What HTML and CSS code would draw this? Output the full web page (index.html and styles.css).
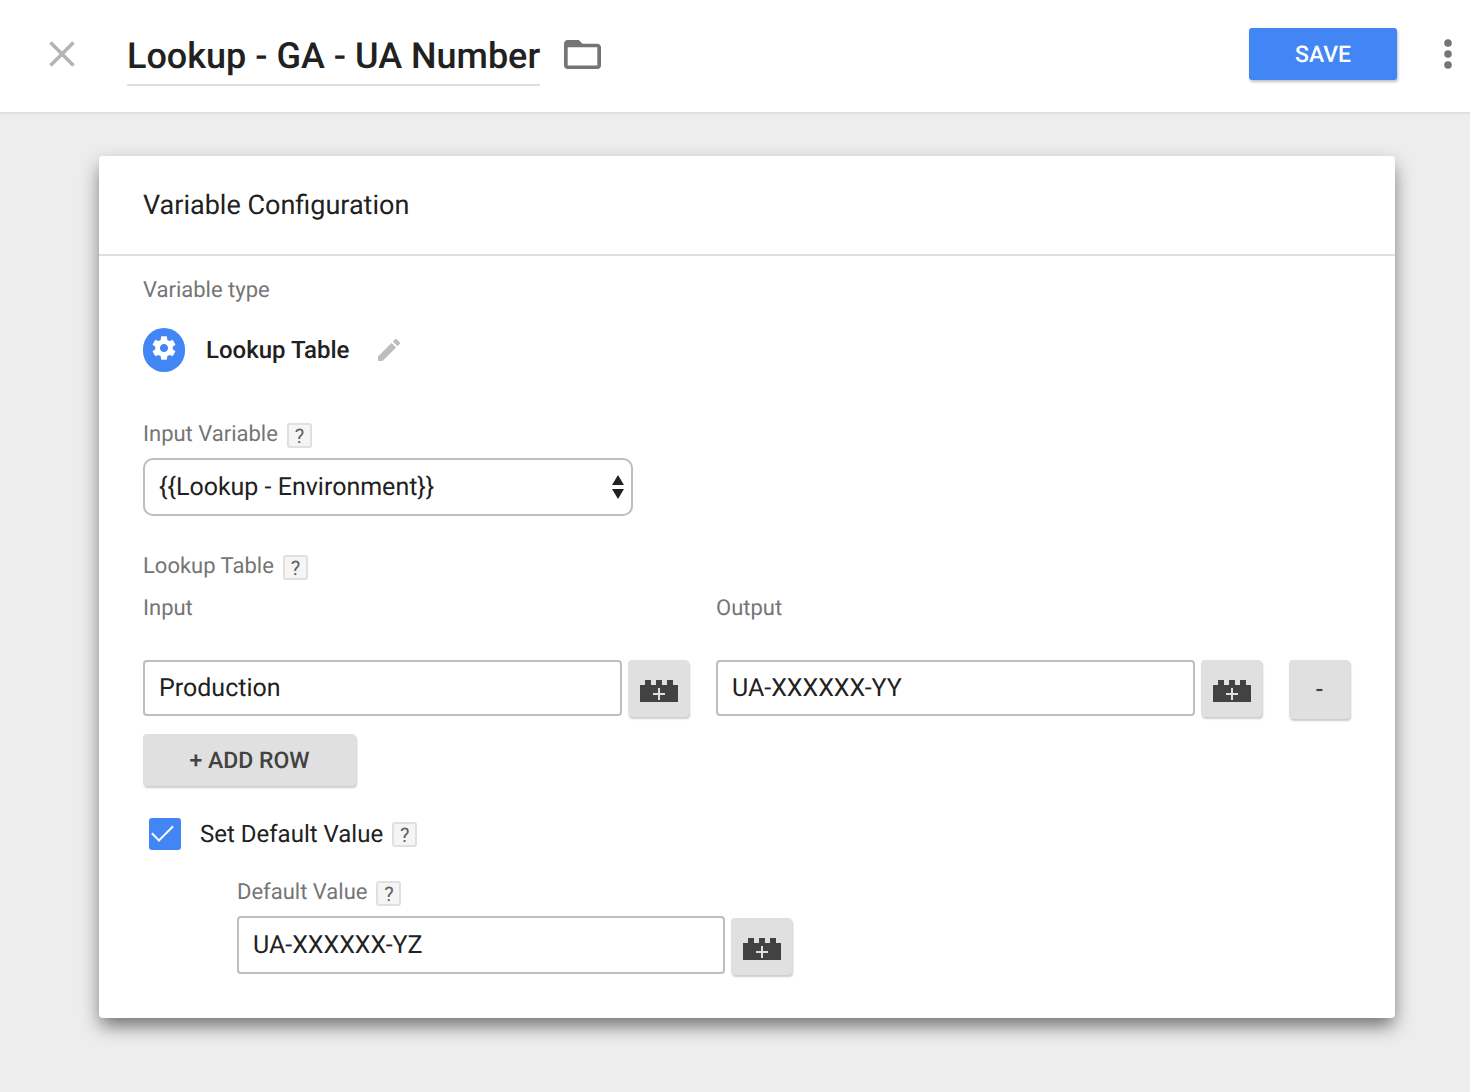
FILE: index.html
```html
<!DOCTYPE html>
<html lang="en">
<head>
<meta charset="utf-8">
<meta name="viewport" content="width=device-width, initial-scale=1">
<title>Lookup - GA - UA Number</title>
<link rel="stylesheet" href="styles.css">
</head>
<body>
<svg class="sprite" aria-hidden="true">
  <symbol id="brick" viewBox="0 0 38 22">
    <path fill="#424242" d="M0 5h5V0h6v5h5V0h6v5h5V0h6v5h5v17H0z"/>
    <path stroke="#e0e0e0" stroke-width="2" d="M13 14h12M19 8v12"/>
  </symbol>
</svg>

<header class="topbar">
  <button class="icon-button close" type="button" aria-label="Close">
    <svg width="26" height="26" viewBox="0 0 26 26"><path d="M1.500 1.500l23 23M24.500 1.500l-23 23" stroke="#b4b4b4" stroke-width="3.600"/></svg>
  </button>
  <h1 class="title">Lookup - GA - UA Number</h1>
  <button class="icon-button folder" type="button" aria-label="Move to folder">
    <svg width="37" height="29" viewBox="2 4 20 16" preserveAspectRatio="none"><path fill="#757575" d="M20 6h-8l-2-2H4c-1.100 0-1.990.9-1.990 2L2 18c0 1.100.9 2 2 2h16c1.100 0 2-.9 2-2V8c0-1.100-.9-2-2-2zm0 12H4V8h16v10z"/></svg>
  </button>
  <button class="save" type="button">SAVE</button>
  <button class="icon-button more" type="button" aria-label="More actions">
    <svg width="8" height="30" viewBox="0 0 8 30" fill="#757575"><circle cx="4" cy="4" r="3.800"/><circle cx="4" cy="15" r="3.800"/><circle cx="4" cy="26" r="3.800"/></svg>
  </button>
</header>

<main class="card">
  <h2 class="card-title">Variable Configuration</h2>
  <form class="card-body">
    <div class="label-row">Variable type</div>
    <div class="type-row">
      <span class="type-badge">
        <svg width="28" height="28" viewBox="0 0 24 24"><path fill="#fff" d="M19.430 12.980c.04-.32.07-.64.07-.98s-.03-.66-.07-.98l2.110-1.650c.19-.15.24-.42.12-.64l-2-3.460c-.12-.22-.39-.3-.61-.22l-2.490 1c-.52-.4-1.080-.73-1.690-.98l-.38-2.650C14.460 2.180 14.250 2 14 2h-4c-.25 0-.46.18-.49.42l-.38 2.650c-.61.25-1.170.59-1.690.98l-2.490-1c-.23-.09-.49 0-.61.22l-2 3.460c-.13.22-.07.49.12.64l2.110 1.650c-.04.32-.07.65-.07.98s.03.66.07.98l-2.110 1.650c-.19.15-.24.42-.12.64l2 3.460c.12.22.39.3.61.22l2.490-1c.52.4 1.080.73 1.690.98l.38 2.650c.03.24.24.42.49.42h4c.25 0 .46-.18.49-.42l.38-2.650c.61-.25 1.170-.59 1.690-.98l2.490 1c.23.09.49 0 .61-.22l2-3.460c.12-.22.07-.49-.12-.64l-2.110-1.650zM12 15.500c-1.930 0-3.500-1.570-3.500-3.500s1.570-3.500 3.500-3.500 3.500 1.570 3.500 3.500-1.570 3.500-3.500 3.500z"/></svg>
      </span>
      <span class="type-name">Lookup Table</span>
      <button class="icon-button" type="button" aria-label="Edit variable type">
        <svg width="22" height="22" viewBox="3 3 18 18"><path fill="#bdbdbd" d="M3 17.250V21h3.750L17.810 9.940l-3.750-3.750L3 17.250zM20.710 7.040c.39-.39.39-1.020 0-1.410l-2.340-2.340c-.39-.39-1.020-.39-1.410 0l-1.830 1.830 3.750 3.750 1.830-1.830z"/></svg>
      </button>
    </div>

    <div class="label-row">
      <label for="input-variable">Input Variable</label>
      <button class="help" type="button" aria-label="Help">?</button>
    </div>
    <div class="select-wrap">
      <select id="input-variable" class="field select"><option>{{Lookup - Environment}}</option></select>
      <svg class="arrows" width="12" height="24" viewBox="0 0 12 24"><path fill="#212121" d="M6 0l6 10H0zM6 24l6-10H0z"/></svg>
    </div>

    <div class="label-row">
      <span>Lookup Table</span>
      <button class="help" type="button" aria-label="Help">?</button>
    </div>
    <table class="lookup">
      <thead>
        <tr><th scope="col">Input</th><th scope="col">Output</th><td class="remove-col"></td></tr>
      </thead>
      <tbody>
        <tr>
          <td>
            <div class="field-row">
              <input class="field" type="text" value="Production" aria-label="Input">
              <button class="gray-button brick" type="button" aria-label="Insert variable"><svg width="38" height="22"><use href="#brick"/></svg></button>
            </div>
          </td>
          <td>
            <div class="field-row">
              <input class="field" type="text" value="UA-XXXXXX-YY" aria-label="Output">
              <button class="gray-button brick" type="button" aria-label="Insert variable"><svg width="38" height="22"><use href="#brick"/></svg></button>
            </div>
          </td>
          <td class="remove-col"><button class="gray-button remove" type="button">-</button></td>
        </tr>
      </tbody>
    </table>
    <button class="gray-button add-row" type="button">+ ADD ROW</button>

    <div class="check-row">
      <input id="set-default" class="checkbox" type="checkbox" checked>
      <label for="set-default">Set Default Value</label>
      <button class="help" type="button" aria-label="Help">?</button>
    </div>
    <div class="default-group">
      <div class="label-row">
        <label for="default-value">Default Value</label>
        <button class="help" type="button" aria-label="Help">?</button>
      </div>
      <div class="field-row default-row">
        <input id="default-value" class="field" type="text" value="UA-XXXXXX-YZ">
        <button class="gray-button brick" type="button" aria-label="Insert variable"><svg width="38" height="22"><use href="#brick"/></svg></button>
      </div>
    </div>
  </form>
</main>
</body>
</html>
```

FILE: styles.css
```css
* {
  box-sizing: border-box;
}

body {
  margin: 0;
  background: #ededed;
  color: #212121;
  font-family: Roboto, "Liberation Sans", sans-serif;
  font-size: 24px;
  text-rendering: geometricPrecision;
}

button,
input,
select {
  margin: 0;
  color: inherit;
  font-family: inherit;
  text-rendering: inherit;
}

button {
  flex: none;
  padding: 0;
  border: 0;
  background: none;
  cursor: pointer;
}

svg {
  display: block;
}

.sprite {
  position: absolute;
  width: 0;
  height: 0;
}

.topbar {
  display: flex;
  align-items: flex-start;
  padding: 28px 18px 26px 49px;
  border-bottom: 2px solid #e0e0e0;
  background: #fff;
}

.icon-button {
  display: flex;
  align-items: center;
  justify-content: center;
}

.close,
.folder,
.more {
  height: 52px;
}

.title {
  margin: 0 24px 0 52px;
  border-bottom: 2px solid #e0e0e0;
  font-size: 36px;
  font-weight: 500;
  line-height: 56px;
}

.save {
  width: 148px;
  height: 52px;
  margin-right: 47px;
  margin-left: auto;
  border-radius: 3px;
  background: #4285f4;
  box-shadow: 1px 2px 3px rgba(0, 0, 0, 0.25);
  color: #fff;
  font-size: 23px;
  font-weight: 500;
}

.card {
  margin: 42px 75px 74px 99px;
  border-radius: 4px;
  background: #fff;
  box-shadow: 0 8px 20px rgba(0, 0, 0, 0.28), 0 10px 16px -4px rgba(0, 0, 0, 0.35);
}

.card-title {
  margin: 0;
  padding: 0 44px;
  border-bottom: 2px solid #e0e0e0;
  font-size: 27px;
  font-weight: 400;
  line-height: 98px;
}

.card-body {
  padding: 20px 44px 43px;
}

.label-row {
  display: flex;
  align-items: center;
  gap: 9px;
  height: 30px;
  color: #757575;
  font-size: 22px;
  line-height: 30px;
}

.help {
  width: 25px;
  height: 25px;
  border: 2px solid #e0e0e0;
  border-radius: 3px;
  background: #f5f5f5;
  color: #616161;
  font-size: 20px;
  line-height: 23px;
}

.type-row {
  display: flex;
  align-items: center;
  margin: 22px 0 48px;
}

.type-badge {
  display: flex;
  justify-content: center;
  width: 42px;
  height: 44px;
  padding-top: 6px;
  border-radius: 21px;
  background: #4285f4;
}

.type-name {
  margin: 0 29px 0 21px;
  font-weight: 500;
}

.field {
  width: 100%;
  min-width: 0;
  height: 56px;
  padding: 0 14px;
  border: 2px solid #bdbdbd;
  border-radius: 4px;
  background: #fff;
  font-size: 25px;
}

.select-wrap {
  position: relative;
  max-width: 490px;
  margin: 8px 0 36px;
}

.select {
  display: block;
  height: 58px;
  border-radius: 10px;
  appearance: none;
}

.arrows {
  position: absolute;
  top: 17px;
  right: 9px;
  pointer-events: none;
}

.lookup {
  width: 100%;
  margin: 12px 0 15px;
  border-collapse: collapse;
  table-layout: fixed;
}

.lookup th {
  height: 30px;
  padding: 0 0 36px;
  color: #757575;
  font-size: 22px;
  font-weight: 400;
  line-height: 30px;
  text-align: left;
}

.lookup td {
  padding: 0 27px 0 0;
  vertical-align: top;
}

.lookup .remove-col {
  width: 62px;
  padding: 0;
}

.field-row {
  display: flex;
  gap: 6px;
}

.gray-button {
  border-radius: 4px;
  background: #e0e0e0;
  box-shadow: 1px 2px 2px rgba(0, 0, 0, 0.2);
  color: #424242;
  font-size: 23px;
  font-weight: 500;
}

.brick {
  display: flex;
  justify-content: center;
  width: 61px;
  height: 57px;
  padding-top: 20px;
}

.remove {
  display: block;
  width: 61px;
  height: 59px;
}

.add-row {
  display: block;
  width: 213px;
  height: 52px;
}

.check-row {
  display: flex;
  align-items: center;
  gap: 9px;
  height: 32px;
  margin: 32px 0 28px;
  padding-left: 6px;
}

.checkbox {
  flex: none;
  width: 32px;
  height: 32px;
  margin-right: 10px;
  border-radius: 3px;
  background: #4285f4;
  appearance: none;
}

.checkbox:checked::before {
  content: "";
  display: block;
  width: 19px;
  height: 9px;
  margin: 7px 0 0 3px;
  border: solid #fff;
  border-width: 0 0 2px 2px;
  transform: rotate(-45deg);
}

.default-group {
  padding-left: 94px;
}

.default-row {
  max-width: 555px;
  height: 59px;
  margin-top: 8px;
}

.default-row .field {
  height: 58px;
}

.default-row .brick {
  align-self: flex-end;
}
```
